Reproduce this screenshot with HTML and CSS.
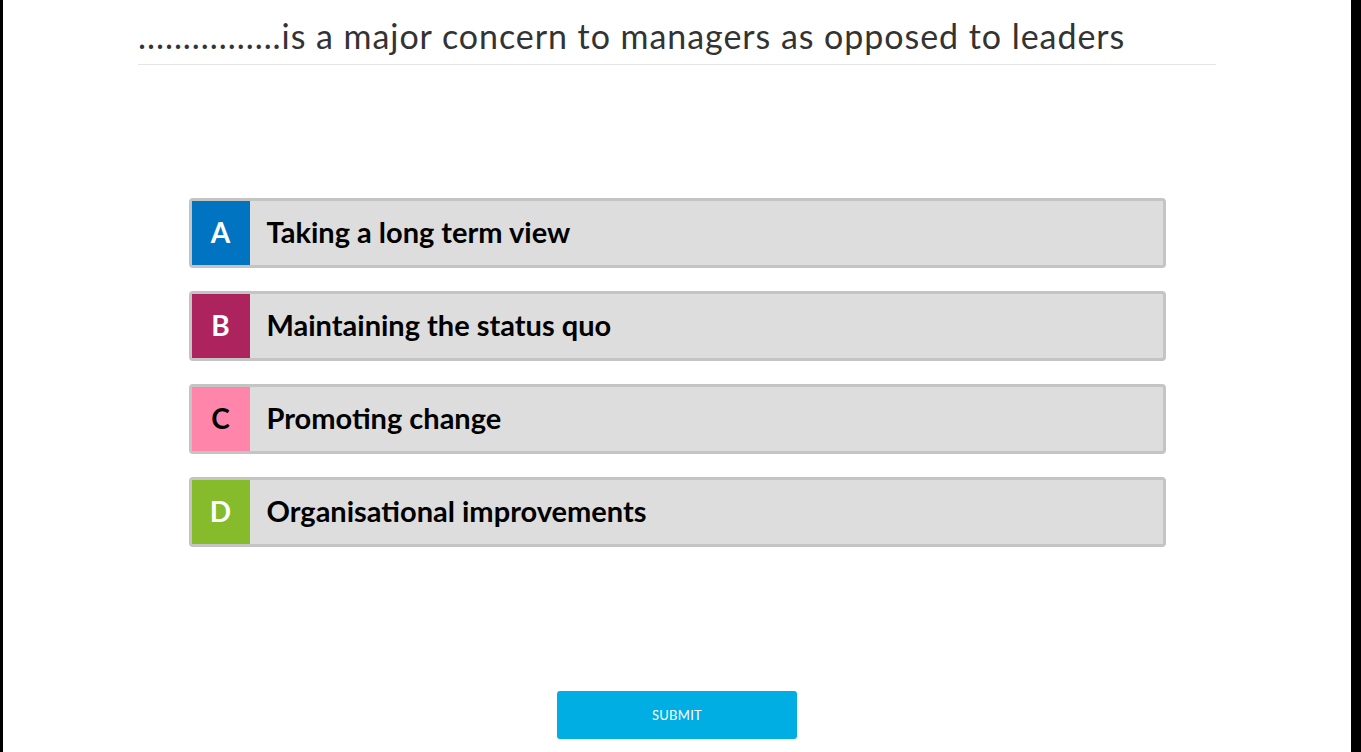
FILE: index.html
```html
<!DOCTYPE html>
<html lang="en">
<head>
<meta charset="utf-8">
<title>Quiz</title>
<link rel="stylesheet" href="styles.css">
</head>
<body>
<div class="frame">
  <main class="page">
    <header class="question">
      <h1 class="question-title">................is a major concern to managers as opposed to leaders</h1>
    </header>
    <ul class="options">
      <li class="option">
        <span class="letter letter-a">A</span>
        <span class="option-text">Taking a long term view</span>
      </li>
      <li class="option">
        <span class="letter letter-b">B</span>
        <span class="option-text">Maintaining the status quo</span>
      </li>
      <li class="option">
        <span class="letter letter-c">C</span>
        <span class="option-text">Promoting change</span>
      </li>
      <li class="option">
        <span class="letter letter-d">D</span>
        <span class="option-text">Organisational improvements</span>
      </li>
    </ul>
    <div class="actions">
      <button class="submit" type="button">SUBMIT</button>
    </div>
  </main>
</div>
</body>
</html>
```

FILE: styles.css
```css
* { box-sizing: border-box; }
html, body {
  margin: 0;
  padding: 0;
  height: 100%;
}
body {
  background: #000;
  font-family: "Lato", "Open Sans", sans-serif;
  overflow: hidden;
}
.frame {
  height: 752px;
  padding: 0 10px 0 3px;
  background: #000;
}
.page {
  background: #fff;
  height: 100%;
  display: flex;
  flex-direction: column;
  align-items: center;
}
.question {
  width: 1078px;
  border-bottom: 1px solid #e6e6e6;
  margin-top: 16px;
  padding-bottom: 8px;
}
.question-title {
  margin: 0;
  font-size: 34px;
  line-height: 40px;
  font-weight: 400;
  color: #333;
  letter-spacing: 0.95px;
}
.options {
  list-style: none;
  margin: 133px 0 0 0;
  padding: 0;
  width: 977px;
  display: flex;
  flex-direction: column;
  gap: 23px;
}
.option {
  display: flex;
  align-items: center;
  height: 70px;
  background: #dddddd;
  border: 3px solid #c4c4c4;
  border-radius: 4px;
}
.letter {
  width: 58px;
  height: 64px;
  display: flex;
  align-items: center;
  justify-content: center;
  padding-bottom: 3px;
  font-size: 28px;
  font-weight: 700;
  color: #fff;
  flex: none;
}
.letter-a { background: #0074c1; }
.letter-b { background: #ad235e; }
.letter-c { background: #ff85ab; color: #000; }
.letter-d { background: #86bc2b; }
.option-text {
  margin-left: 17px;
  padding-bottom: 3px;
  font-size: 29px;
  font-weight: 700;
  color: #000;
}
.actions {
  margin-top: 144px;
}
.submit {
  width: 240px;
  height: 48px;
  background: #00aee3;
  border: none;
  border-radius: 3px;
  color: #fff;
  font-family: "Lato", "Open Sans", sans-serif;
  font-size: 13px;
  font-weight: 400;
  letter-spacing: 0.3px;
  cursor: pointer;
}
```
